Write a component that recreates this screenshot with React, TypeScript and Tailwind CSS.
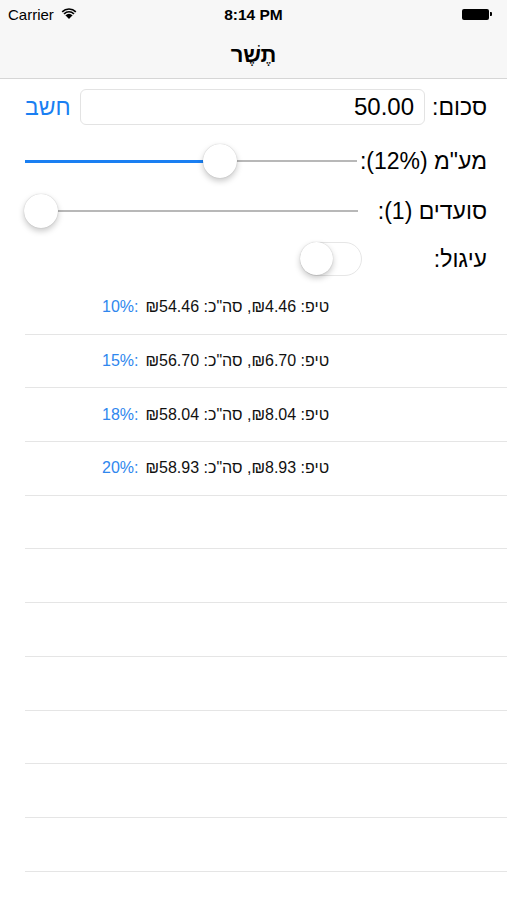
import React from "react";

const font = { fontFamily: '"Liberation Sans", "DejaVu Sans", Arial, sans-serif' };

function Wifi() {
  return (
    <svg width="16" height="12" viewBox="0 0 16 12" className="ml-[7px] mt-[-2px]">
      <path d="M8 12 L0.6 4.2 A10.5 10.5 0 0 1 15.4 4.2 Z" fill="#000" />
      <path d="M2.2 5.9 A8 8 0 0 1 13.8 5.9" stroke="#f7f7f7" strokeWidth="1.3" fill="none" />
      <path d="M4.1 7.9 A5.3 5.3 0 0 1 11.9 7.9" stroke="#f7f7f7" strokeWidth="1.3" fill="none" />
    </svg>
  );
}

function Battery() {
  return (
    <div className="flex items-center">
      <div className="w-[27px] h-[11px] rounded-[2px] bg-black" />
      <div className="w-[2px] h-[4px] bg-black rounded-r-[1px] ml-[1px]" />
    </div>
  );
}

function Slider({ width, pos }: { width: number; pos: number }) {
  return (
    <div className="relative h-[36px] flex items-center" style={{ width }}>
      <div className="h-[2px] w-full bg-[#b8b8b8]" />
      <div className="absolute left-0 h-[3px] bg-[#1a7ff2]" style={{ width: pos }} />
      <div
        className="absolute w-[34px] h-[34px] rounded-full bg-white shadow-[0_3px_6px_rgba(0,0,0,0.22),0_0_1px_rgba(0,0,0,0.25)]"
        style={{ left: pos - 17 }}
      />
    </div>
  );
}

const rows = [
  { p: "10%:", tip: "₪4.46", total: "₪54.46" },
  { p: "15%:", tip: "₪6.70", total: "₪56.70" },
  { p: "18%:", tip: "₪8.04", total: "₪58.04" },
  { p: "20%:", tip: "₪8.93", total: "₪58.93" },
];

export default function App() {
  const empties = Array.from({ length: 8 });
  return (
    <div className="w-[507px] h-[900px] bg-white overflow-hidden text-black" style={font}>
      {/* status + nav */}
      <div className="bg-[#f7f7f7] border-b border-[#d6d6d6] h-[79px] flex flex-col">
        <div className="h-[28px] relative flex items-center px-[8px]">
          <div className="flex items-center text-[15px] leading-none">
            <span>Carrier</span>
            <Wifi />
          </div>
          <div className="absolute left-0 right-0 top-[7px] text-center text-[15.5px] font-bold leading-none">8:14 PM</div>
          <div className="ml-auto mr-[7px]">
            <Battery />
          </div>
        </div>
        <div className="flex-1 flex items-center justify-center pt-[4px]">
          <span className="text-[22px] font-bold leading-none" dir="rtl">תֶשֶׁר</span>
        </div>
      </div>

      {/* form */}
      <div className="pl-[25px] pr-[20px]">
        <div className="mt-[10px] h-[36px] flex items-center">
          <span className="text-[23px] text-[#1a7ff2] leading-none w-[55px] text-left" dir="rtl">חשב</span>
          <div className="w-[345px] h-[36px] rounded-[6px] border border-[#e3e3e3] flex items-center justify-end pr-[10px]">
            <span className="text-[24px] leading-none">50.00</span>
          </div>
          <span className="ml-auto text-[23px] leading-none" dir="rtl">סכום:</span>
        </div>

        <div className="mt-[18px] h-[36px] flex items-center">
          <Slider width={332} pos={195} />
          <span className="ml-auto text-[23px] leading-none" dir="rtl">מע"מ (12%):</span>
        </div>

        <div className="mt-[14px] h-[36px] flex items-center">
          <Slider width={333} pos={16} />
          <span className="ml-auto text-[23px] leading-none" dir="rtl">סועדים (1):</span>
        </div>

        <div className="mt-[12px] h-[36px] flex items-center">
          <div className="ml-[275px] relative w-[62px] h-[34px] rounded-full border-[1.5px] border-[#e6e6e6] bg-white">
            <div className="absolute left-[-1px] top-[-1px] w-[33px] h-[33px] rounded-full bg-white shadow-[0_3px_6px_rgba(0,0,0,0.22),0_0_1px_rgba(0,0,0,0.25)]" />
          </div>
          <span className="ml-auto text-[23px] leading-none" dir="rtl">עיגול:</span>
        </div>
      </div>

      {/* table */}
      <div className="mt-[4px]">
        {rows.map((r) => (
          <div key={r.p} className="h-[53.7px] pl-[25px]">
            <div className="h-full border-b border-[#e5e5e5] flex items-center pl-[77px]">
              <span className="text-[16px] text-[#2f87ee] leading-none" dir="ltr">{r.p}</span>
              <span className="ml-[7px] text-[16px] text-[#111] leading-none" dir="rtl">
                טיפ: {r.tip}, סה"כ: {r.total}
              </span>
            </div>
          </div>
        ))}
        {empties.map((_, i) => (
          <div key={i} className="h-[53.7px] pl-[25px]">
            <div className="h-full border-b border-[#e5e5e5]" />
          </div>
        ))}
      </div>
    </div>
  );
}
